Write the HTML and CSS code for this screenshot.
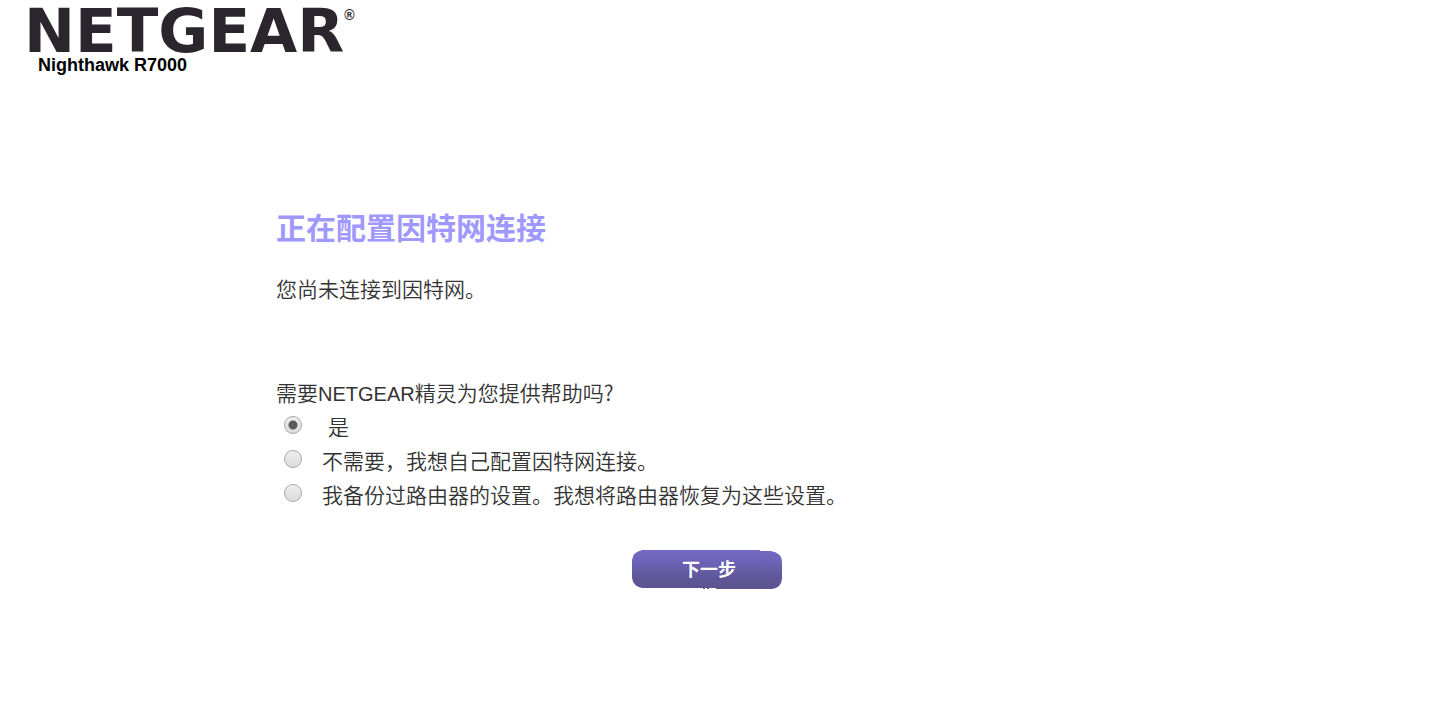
FILE: index.html
```
<!DOCTYPE html>
<html lang="zh-CN">
<head>
<meta charset="utf-8">
<title>NETGEAR R7000</title>
<link rel="stylesheet" href="styles.css">
</head>

<body>

<div class="top">
	<div class="logo">NETGEAR<span class="reg">®</span></div>
	<div class="model">Nighthawk R7000</div>
</div>

<form class="wizard">
	<h1 class="title">正在配置因特网连接</h1>
	<p class="status">您尚未连接到因特网。</p>

	<fieldset class="choices">
		<legend class="question">需要<span class="brand">NETGEAR</span>精灵为您提供帮助吗?</legend>
		<div class="choice">
			<input type="radio" name="choice" id="yes" checked>
			<label class="first" for="yes">是</label>
		</div>
		<div class="choice">
			<input type="radio" name="choice" id="no">
			<label for="no">不需要，我想自己配置因特网连接。</label>
		</div>
		<div class="choice">
			<input type="radio" name="choice" id="restore">
			<label for="restore">我备份过路由器的设置。我想将路由器恢复为这些设置。</label>
		</div>
	</fieldset>

	<div class="buttons">
		<button class="next" type="button">
			<svg class="next-bg" viewBox="0 0 150 39" aria-hidden="true">
				<defs>
					<linearGradient id="purple" x1="0" y1="0" x2="0" y2="1">
						<stop offset="0" stop-color="#7469c6"/>
						<stop offset="0.35" stop-color="#6c62b4"/>
						<stop offset="0.7" stop-color="#5f5799"/>
						<stop offset="1" stop-color="#5b548f"/>
					</linearGradient>
				</defs>
				<path fill="url(#purple)" d="M10 0H128V1H139Q150 3 150 12V29Q149 38 140 39H84V38H77V39H75V38H73V39H71V38H10Q1 36 0 28V10Q1 2 10 0Z"/>
			</svg>
			<span class="next-text">下一步</span>
		</button>
	</div>
</form>

</body>
</html>
```

FILE: styles.css
```
body {
	margin: 0;
	background: #fff;
	color: #333;
	font-family: "Liberation Sans", "Noto Sans CJK SC", sans-serif;
	font-size: 21px;
}

.top {
	padding: 6px 0 0 24px;
}
.logo {
	display: flex;
	align-items: flex-start;
	color: #2b262d;
	font-family: "DejaVu Sans", sans-serif;
	font-weight: bold;
	font-size: 61px;
	font-kerning: none;
	line-height: 50px;
}
.reg {
	font-family: "Liberation Sans", sans-serif;
	font-size: 14px;
	line-height: 18px;
}
.model {
	padding-left: 14px;
	color: #000;
	font-size: 18px;
	font-weight: bold;
	line-height: 18px;
}

.wizard {
	width: 60%;
	margin: 130px 0 0 276px;
	font-family: "Noto Sans CJK SC", sans-serif;
	font-weight: 350;
}
.title {
	margin: 0;
	color: #9f99ff;
	font-size: 30px;
	font-weight: bold;
	line-height: 44px;
}
.status {
	margin: 23px 0 70px;
	line-height: 34px;
}
.choices {
	margin: 0;
	padding: 0;
	border: 0;
}
.question {
	padding: 0;
	line-height: 34px;
}
.brand {
	font-family: "Liberation Sans", sans-serif;
	font-size: 20px;
}
.choice {
	display: flex;
	align-items: flex-start;
	gap: 20px;
	padding-left: 8px;
}
.choice label {
	line-height: 30px;
}
.choice input {
	appearance: none;
	flex: none;
	width: 18px;
	height: 18px;
	margin: 5px 0 11px;
	border: 1px solid #a8a8a8;
	border-radius: 50%;
	background: linear-gradient(#eee, #dcdcdc);
}
.choice input:checked {
	background: radial-gradient(circle, #5c5c5c 4px, transparent 5px), linear-gradient(#eee, #dcdcdc);
}
.first {
	padding-left: 6px;
}

.buttons {
	display: flex;
	justify-content: center;
	margin-top: 37px;
}
.next {
	position: relative;
	width: 150px;
	height: 39px;
	padding: 0 0 4px 4px;
	border: 0;
	background: none;
	color: #fff;
	font-family: "Noto Sans CJK SC", sans-serif;
	font-size: 18px;
	font-weight: bold;
	cursor: pointer;
}
.next-bg {
	position: absolute;
	top: 0;
	left: 0;
	width: 100%;
	height: 100%;
}
.next-text {
	position: relative;
}
```
